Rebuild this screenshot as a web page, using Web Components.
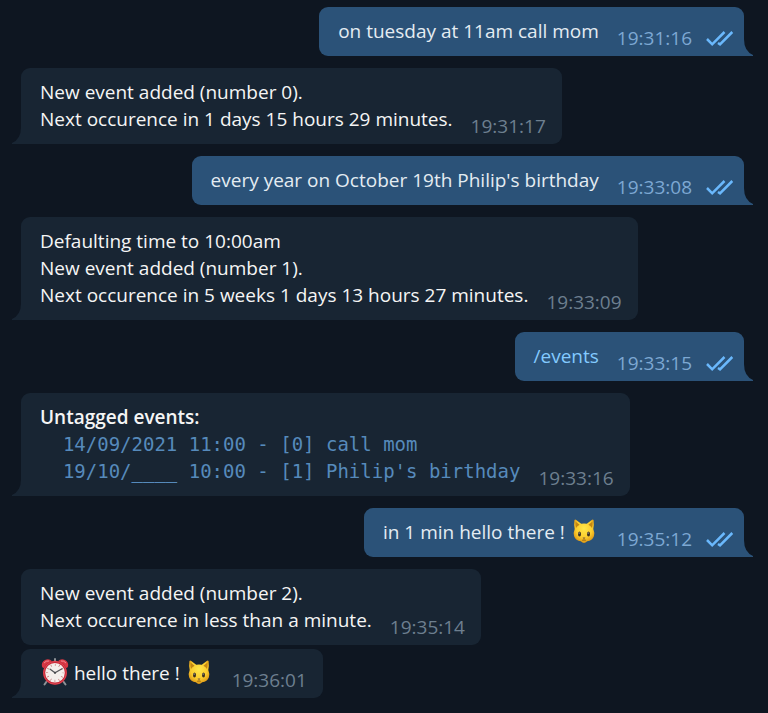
<!DOCTYPE html>
<html lang="en">
<head>
<meta charset="utf-8">
<title>Chat</title>
<style>
  body { margin: 0; background: #0e1621; font-family: "Open Sans", sans-serif; font-size: 19px; line-height: 27px; }
  strong { font-weight: 600; }
</style>
</head>
<body>
<chat-log>
  <chat-message out time="19:31:16">on tuesday at 11am call mom</chat-message>
  <chat-message time="19:31:17">New event added (number 0).<br>Next occurence in 1 days 15 hours 29 minutes.</chat-message>
  <chat-message out time="19:33:08">every year on October 19th Philip's birthday</chat-message>
  <chat-message time="19:33:09">Defaulting time to 10:00am<br>New event added (number 1).<br>Next occurence in 5 weeks 1 days 13 hours 27 minutes.</chat-message>
  <chat-message out time="19:33:15"><bot-command>/events</bot-command></chat-message>
  <chat-message time="19:33:16"><strong>Untagged events:</strong><mono-text>  14/09/2021 11:00 - [0] call mom
  19/10/____ 10:00 - [1] Philip's birthday</mono-text></chat-message>
  <chat-message out time="19:35:12">in 1 min hello there ! <cat-emoji></cat-emoji></chat-message>
  <chat-message time="19:35:14" grouped>New event added (number 2).<br>Next occurence in less than a minute.</chat-message>
  <chat-message time="19:36:01"><clock-emoji></clock-emoji> hello there ! <cat-emoji></cat-emoji></chat-message>
</chat-log>
<script>
  const define = (name, html, setup) => customElements.define(name, class extends HTMLElement {
    connectedCallback() {
      if (this.shadowRoot) return;
      this.attachShadow({ mode: "open" }).innerHTML = html.trim();
      if (setup) setup(this, this.shadowRoot);
    }
  });

  define("chat-log", `
    <style>
      :host { display: flex; flex-direction: column; gap: 12px; padding: 7px 24px 15px 21px; }
      ::slotted([grouped]) { margin-bottom: -8px; }
    </style>
    <slot></slot>`);

  define("bot-command", `
    <style>
      a { color: #83caff; text-decoration: none; }
    </style>
    <a href="#events"><slot></slot></a>`);

  define("mono-text", `<style>
      :host { display: block; color: #568abb; font-family: "DejaVu Sans Mono", monospace; }
      code { display: block; font: inherit; white-space: pre; }
    </style><code><slot></slot></code>`);

  define("cat-emoji", `
    <style>
      :host { display: inline-block; width: 29px; height: 24px; vertical-align: -4px; }
      svg { display: block; margin: 0 auto; }
    </style>
    <svg width="24" height="24" viewBox="0 0 24 24" role="img" aria-label="cat face">
      <defs><radialGradient id="f" cx=".5" cy=".38" r=".65"><stop offset="0" stop-color="#ffe74a"/><stop offset=".6" stop-color="#fccd2d"/><stop offset="1" stop-color="#d88e12"/></radialGradient></defs>
      <path d="M2.4 1Q3.2.2 4.3 1L9.2 4.8Q12 4.2 14.8 4.8L19.7 1Q20.8.2 21.6 1Q22.3 6 21.3 10Q23 14 21.9 17.2Q20.3 21.6 15.2 22.2Q13.5 24 12 24Q10.5 24 8.8 22.2Q3.7 21.6 2.1 17.2Q1 14 2.7 10Q1.7 6 2.4 1Z" fill="url(#f)"/>
      <path d="M3.5 2.4L7.6 5.8Q5.1 7 4 9Q3.1 5.7 3.5 2.4ZM20.5 2.4L16.4 5.8Q18.9 7 20 9Q20.9 5.7 20.5 2.4Z" fill="#c48713"/>
      <ellipse cx="7.5" cy="15" rx="1.5" ry="2.5" fill="#3b3021"/><ellipse cx="16.5" cy="15" rx="1.5" ry="2.5" fill="#3b3021"/>
      <circle cx="7.1" cy="14" r=".5" fill="#fff"/><circle cx="16.1" cy="14" r=".5" fill="#fff"/>
      <path d="M10.5 18.5H13.5L12 20Z" fill="#745c44"/>
      <path d="M12 19.5V21M10 21Q11.5 22 12 21Q12.5 22 14 21" fill="none" stroke="#936415" stroke-width=".8"/>
    </svg>`);

  define("clock-emoji", `
    <style>
      :host { display: inline-block; width: 29px; height: 28px; margin: -4px 0 -2px; vertical-align: -4px; }
      svg { display: block; margin: 0 auto; }
    </style>
    <svg width="28" height="28" viewBox="0 0 28 28" role="img" aria-label="alarm clock">
      <path d="M6 23L3.5 26.5M22 23L24.5 26.5M14 1V4" stroke="#8d9297" stroke-width="2" stroke-linecap="round"/>
      <path d="M1 8.5Q0 4 4 2Q8 0 11 3.2L3.2 9.8Q1.6 10.4 1 8.5ZM27 8.5Q28 4 24 2Q20 0 17 3.2L24.8 9.8Q26.4 10.4 27 8.5Z" fill="#d83744"/>
      <path d="M3 5Q5 2.5 8 3M20 3Q23 2.5 25 5" fill="none" stroke="#f28a90" stroke-width="1"/>
      <circle cx="14" cy="14.8" r="12" fill="#c72636"/>
      <circle cx="14" cy="14.8" r="11.3" fill="none" stroke="#e75760" stroke-width=".7"/>
      <circle cx="14" cy="14.8" r="9.8" fill="#f4eeeb"/>
      <circle cx="14" cy="14.8" r="8" fill="none" stroke="#c47b79" stroke-width="2.2" stroke-dasharray=".7 3.489" stroke-dashoffset=".35"/>
      <path d="M9.2 11.2L14 14.8L21 10.8" fill="none" stroke="#55565a" stroke-width="1.3" stroke-linecap="round"/>
      <circle cx="14" cy="14.8" r="1.1" fill="#45464a"/>
    </svg>`);

  define("chat-message", `
    <style>
      :host { --bubble: #182533; display: flex; color: #f5f5f5; }
      :host([out]) { --bubble: #2b5278; justify-content: flex-end; color: #e4ecf2; }
      article { position: relative; display: flex; align-items: flex-end; gap: 18px; padding: 11px 16px 4px 19px; background: var(--bubble); border-radius: 9px 9px 9px 0; }
      :host([out]) article { padding-right: 10px; border-radius: 9px 9px 0 9px; }
      :host([grouped]) article { border-radius: 9px; }
      .text { padding-bottom: 7px; }
      footer { display: flex; align-items: center; gap: 14px; color: #6d7f8f; }
      :host([out]) footer { color: #7da8d3; }
      .checks, .tail { display: none; }
      :host([out]) .checks { display: block; }
      :host(:not([grouped])) .tail { display: block; position: absolute; bottom: 0; right: 100%; fill: var(--bubble); }
      :host([out]) .tail { right: auto !important; left: 100%; transform: scaleX(-1); }
    </style>
    <article>
      <div class="text"><slot></slot></div>
      <footer><time></time>
        <svg class="checks" width="28" height="16" viewBox="0 0 28 16" fill="none" stroke="#6ab8fc" stroke-width="2.5" role="img" aria-label="read"><path d="M1 8L6.2 13.3L18.5 1M12 12L14 13.3L26.3 1"/></svg>
      </footer>
      <svg class="tail" width="9" height="20" viewBox="0 0 9 20" aria-hidden="true"><path d="M9 0V20H0V19Q9 15 9 3Z"/></svg>
    </article>`, (host, root) => {
      root.querySelector("time").textContent = host.getAttribute("time");
    });
</script>
</body>
</html>
